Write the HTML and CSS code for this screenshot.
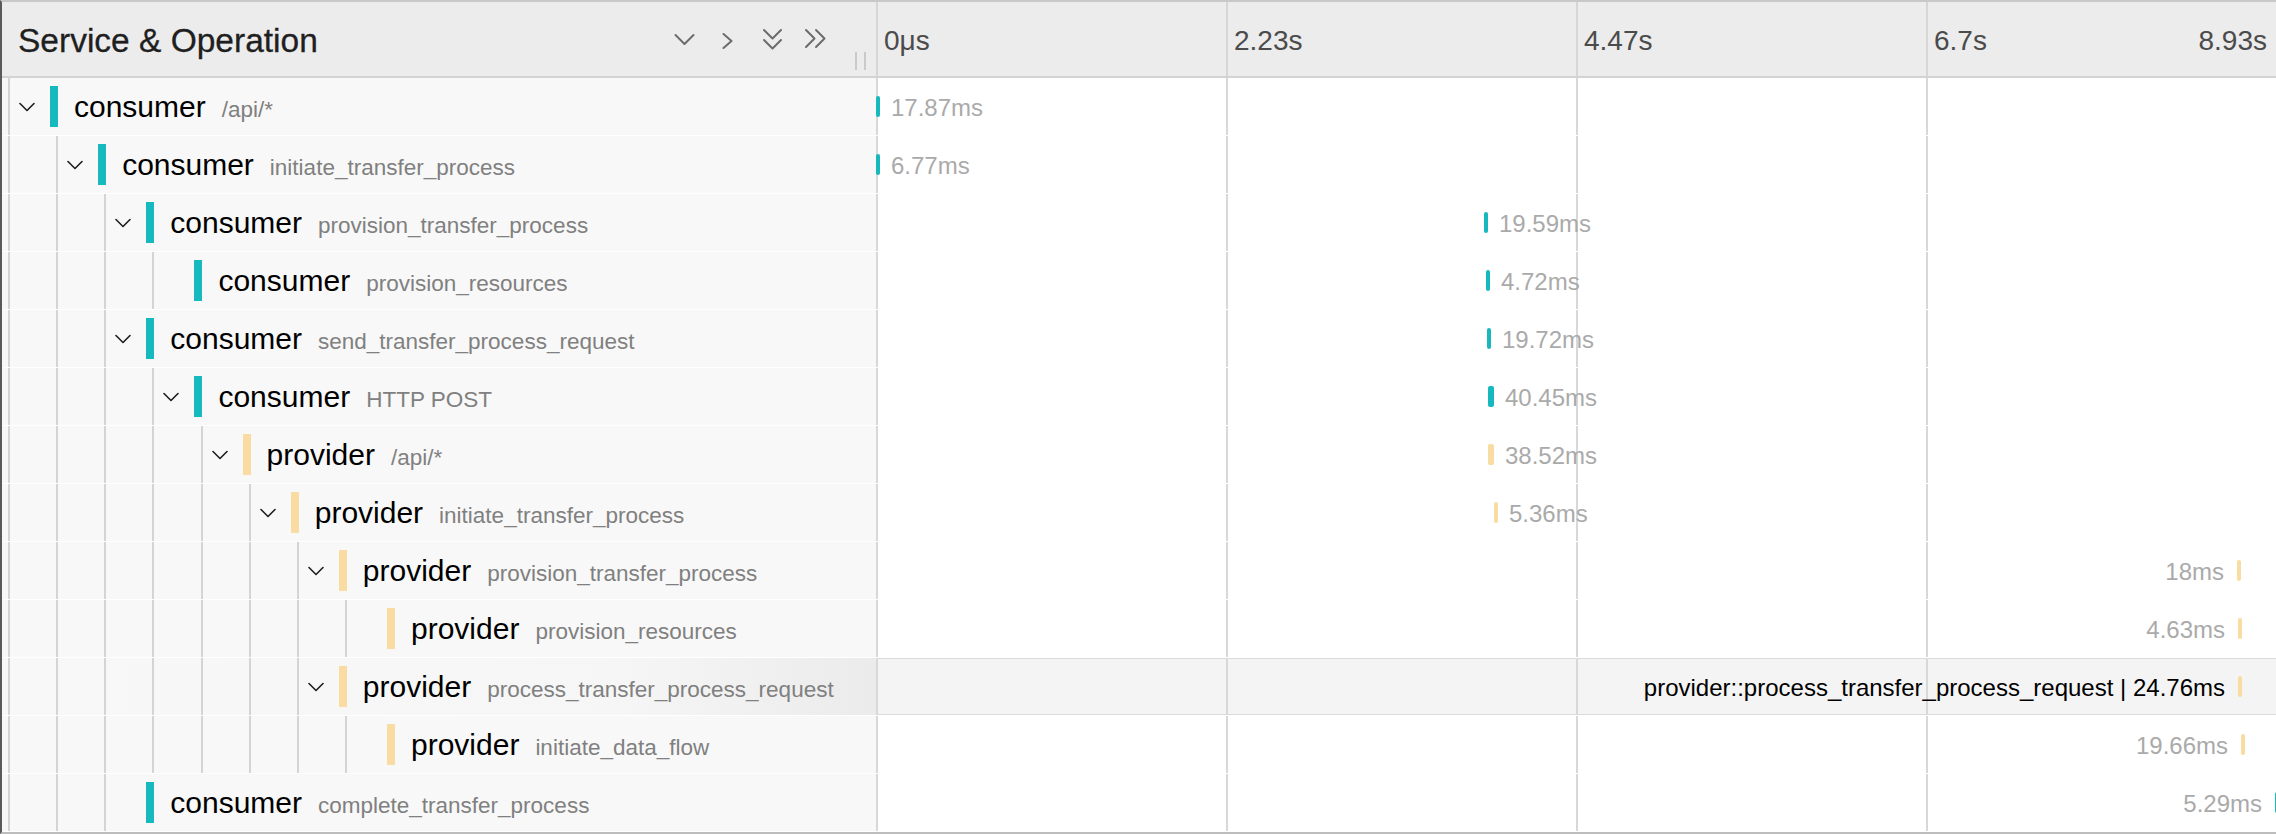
FILE: index.html
```html
<!DOCTYPE html>
<html lang="en">
<head>
<meta charset="utf-8">
<title>Trace timeline</title>
<link rel="stylesheet" href="styles.css">
</head>
<body>
<div class="trace">
  <div class="header">
    <div class="header-left">
      <h3 class="title">Service &amp; Operation</h3>
      <div class="controls">
        <svg class="ic ic1" width="21" height="15" viewBox="0 0 21 15"><polyline points="1.5,3 10.5,12 19.5,3"/></svg>
        <svg class="ic ic2" width="14" height="16" viewBox="0 0 14 16"><polyline points="2.5,1 10.5,8 2.5,15"/></svg>
        <svg class="ic ic3" width="21" height="23" viewBox="0 0 21 23"><polyline points="2,2 10.5,10.5 19,2"/><polyline points="2,12 10.5,20.5 19,12"/></svg>
        <svg class="ic ic4" width="23" height="21" viewBox="0 0 23 21"><polyline points="2,2 10.5,10.5 2,19"/><polyline points="12,2 20.5,10.5 12,19"/></svg>
        <span class="resizer"></span>
      </div>
    </div>
    <div class="header-right">
      <div class="tick"><span>0μs</span></div>
      <div class="tick"><span>2.23s</span></div>
      <div class="tick"><span>4.47s</span></div>
      <div class="tick last"><span>6.7s</span><span>8.93s</span></div>
    </div>
  </div>

  <div class="rows">
    <div class="row">
      <div class="name-col">
        <span class="toggle"><svg class="chev" width="16" height="10" viewBox="0 0 16 10"><polyline points="1,1.5 8,8.5 15,1.5"/></svg></span>
        <span class="marker consumer"></span>
        <span class="name"><span class="svc">consumer</span><span class="op">/api/*</span></span>
      </div>
      <div class="timeline"><span class="bar consumer" style="left:0px;width:4px"><span class="bar-label after">17.87ms</span></span></div>
    </div>

    <div class="row">
      <div class="name-col">
        <span class="guide"></span>
        <span class="toggle"><svg class="chev" width="16" height="10" viewBox="0 0 16 10"><polyline points="1,1.5 8,8.5 15,1.5"/></svg></span>
        <span class="marker consumer"></span>
        <span class="name"><span class="svc">consumer</span><span class="op">initiate_transfer_process</span></span>
      </div>
      <div class="timeline"><span class="bar consumer" style="left:0px;width:4px"><span class="bar-label after">6.77ms</span></span></div>
    </div>

    <div class="row">
      <div class="name-col">
        <span class="guide"></span><span class="guide"></span>
        <span class="toggle"><svg class="chev" width="16" height="10" viewBox="0 0 16 10"><polyline points="1,1.5 8,8.5 15,1.5"/></svg></span>
        <span class="marker consumer"></span>
        <span class="name"><span class="svc">consumer</span><span class="op">provision_transfer_process</span></span>
      </div>
      <div class="timeline"><span class="bar consumer" style="left:608px;width:4px"><span class="bar-label after">19.59ms</span></span></div>
    </div>

    <div class="row">
      <div class="name-col">
        <span class="guide"></span><span class="guide"></span><span class="guide"></span>
        <span class="toggle"></span>
        <span class="marker consumer"></span>
        <span class="name"><span class="svc">consumer</span><span class="op">provision_resources</span></span>
      </div>
      <div class="timeline"><span class="bar consumer" style="left:610px;width:4px"><span class="bar-label after">4.72ms</span></span></div>
    </div>

    <div class="row">
      <div class="name-col">
        <span class="guide"></span><span class="guide"></span>
        <span class="toggle"><svg class="chev" width="16" height="10" viewBox="0 0 16 10"><polyline points="1,1.5 8,8.5 15,1.5"/></svg></span>
        <span class="marker consumer"></span>
        <span class="name"><span class="svc">consumer</span><span class="op">send_transfer_process_request</span></span>
      </div>
      <div class="timeline"><span class="bar consumer" style="left:611px;width:4px"><span class="bar-label after">19.72ms</span></span></div>
    </div>

    <div class="row">
      <div class="name-col">
        <span class="guide"></span><span class="guide"></span><span class="guide"></span>
        <span class="toggle"><svg class="chev" width="16" height="10" viewBox="0 0 16 10"><polyline points="1,1.5 8,8.5 15,1.5"/></svg></span>
        <span class="marker consumer"></span>
        <span class="name"><span class="svc">consumer</span><span class="op">HTTP POST</span></span>
      </div>
      <div class="timeline"><span class="bar consumer" style="left:612px;width:6px"><span class="bar-label after">40.45ms</span></span></div>
    </div>

    <div class="row">
      <div class="name-col">
        <span class="guide"></span><span class="guide"></span><span class="guide"></span><span class="guide"></span>
        <span class="toggle"><svg class="chev" width="16" height="10" viewBox="0 0 16 10"><polyline points="1,1.5 8,8.5 15,1.5"/></svg></span>
        <span class="marker provider"></span>
        <span class="name"><span class="svc">provider</span><span class="op">/api/*</span></span>
      </div>
      <div class="timeline"><span class="bar provider" style="left:612px;width:6px"><span class="bar-label after">38.52ms</span></span></div>
    </div>

    <div class="row">
      <div class="name-col">
        <span class="guide"></span><span class="guide"></span><span class="guide"></span><span class="guide"></span><span class="guide"></span>
        <span class="toggle"><svg class="chev" width="16" height="10" viewBox="0 0 16 10"><polyline points="1,1.5 8,8.5 15,1.5"/></svg></span>
        <span class="marker provider"></span>
        <span class="name"><span class="svc">provider</span><span class="op">initiate_transfer_process</span></span>
      </div>
      <div class="timeline"><span class="bar provider" style="left:618px;width:4px"><span class="bar-label after">5.36ms</span></span></div>
    </div>

    <div class="row">
      <div class="name-col">
        <span class="guide"></span><span class="guide"></span><span class="guide"></span><span class="guide"></span><span class="guide"></span><span class="guide"></span>
        <span class="toggle"><svg class="chev" width="16" height="10" viewBox="0 0 16 10"><polyline points="1,1.5 8,8.5 15,1.5"/></svg></span>
        <span class="marker provider"></span>
        <span class="name"><span class="svc">provider</span><span class="op">provision_transfer_process</span></span>
      </div>
      <div class="timeline"><span class="bar provider" style="left:1361px;width:4px"><span class="bar-label before">18ms</span></span></div>
    </div>

    <div class="row">
      <div class="name-col">
        <span class="guide"></span><span class="guide"></span><span class="guide"></span><span class="guide"></span><span class="guide"></span><span class="guide"></span><span class="guide"></span>
        <span class="toggle"></span>
        <span class="marker provider"></span>
        <span class="name"><span class="svc">provider</span><span class="op">provision_resources</span></span>
      </div>
      <div class="timeline"><span class="bar provider" style="left:1362px;width:4px"><span class="bar-label before">4.63ms</span></span></div>
    </div>

    <div class="row hovered">
      <div class="name-col">
        <span class="guide"></span><span class="guide"></span><span class="guide"></span><span class="guide"></span><span class="guide"></span><span class="guide"></span>
        <span class="toggle"><svg class="chev" width="16" height="10" viewBox="0 0 16 10"><polyline points="1,1.5 8,8.5 15,1.5"/></svg></span>
        <span class="marker provider"></span>
        <span class="name"><span class="svc">provider</span><span class="op">process_transfer_process_request</span></span>
      </div>
      <div class="timeline"><span class="bar provider" style="left:1362px;width:4px"><span class="bar-label before">provider::process_transfer_process_request | 24.76ms</span></span></div>
    </div>

    <div class="row">
      <div class="name-col">
        <span class="guide"></span><span class="guide"></span><span class="guide"></span><span class="guide"></span><span class="guide"></span><span class="guide"></span><span class="guide"></span>
        <span class="toggle"></span>
        <span class="marker provider"></span>
        <span class="name"><span class="svc">provider</span><span class="op">initiate_data_flow</span></span>
      </div>
      <div class="timeline"><span class="bar provider" style="left:1365px;width:4px"><span class="bar-label before">19.66ms</span></span></div>
    </div>

    <div class="row">
      <div class="name-col">
        <span class="guide"></span><span class="guide"></span>
        <span class="toggle"></span>
        <span class="marker consumer"></span>
        <span class="name"><span class="svc">consumer</span><span class="op">complete_transfer_process</span></span>
      </div>
      <div class="timeline"><span class="bar consumer" style="left:1399px;width:4px"><span class="bar-label before">5.29ms</span></span></div>
    </div>
  </div>
</div>
</body>
</html>
```

FILE: styles.css
```css
* {
  box-sizing: border-box;
}

html, body {
  margin: 0;
  padding: 0;
  background: #fff;
}

body {
  font-family: "Liberation Sans", Arial, Helvetica, sans-serif;
  overflow: hidden;
}

.trace {
  width: 2276px;
  height: 834px;
  border-top: 2px solid #c8c8c8;
  border-bottom: 2px solid #bdbdbd;
  border-left: 2px solid #5a5a5a;
  display: flex;
  flex-direction: column;
  overflow: hidden;
}

/* ---------- header ---------- */
.header {
  display: flex;
  height: 76px;
  flex: none;
  background: #ececec;
  border-bottom: 2px solid #d3d3d3;
}

.header-left {
  width: 874px;
  flex: none;
  display: flex;
  align-items: center;
  padding-left: 16px;
}

.title {
  margin: 0;
  font-size: 33.5px;
  font-weight: 400;
  color: #1f1f1f;
  padding-top: 4px;
  flex: 1;
  white-space: nowrap;
  -webkit-text-stroke: 0.3px #1f1f1f;
}

.controls {
  display: flex;
  align-items: center;
  align-self: stretch;
}

.ic {
  flex: none;
  fill: none;
  stroke: #6c6c6c;
  stroke-width: 2;
  stroke-linecap: round;
  stroke-linejoin: round;
}

.ic2 { margin-left: 26px; margin-top: 3px; }
.ic3 { margin-left: 27px; }
.ic4 { margin-left: 21px; margin-top: -2px; }

.resizer {
  align-self: flex-end;
  width: 11px;
  height: 18px;
  margin: 0 10px 6px 28px;
  border-left: 2px solid #cacaca;
  border-right: 2px solid #cacaca;
}

.header-right {
  width: 1400px;
  flex: none;
  display: grid;
  grid-template-columns: repeat(4, 350px);
}

.tick {
  border-left: 2px solid #d6d6d6;
  display: flex;
  align-items: center;
  justify-content: space-between;
  padding: 4px 0 0 6px;
  font-size: 28px;
  color: #4b4b4b;
}

.tick.last {
  padding-right: 9px;
}

/* ---------- rows ---------- */
.rows {
  display: flex;
  flex-direction: column;
}

.row {
  display: flex;
  height: 58px;
  flex: none;
}

.name-col {
  width: 874px;
  flex: none;
  display: flex;
  align-items: stretch;
  padding-left: 6px;
  background: #f8f8f8;
  border-bottom: 1px solid #fff;
  overflow: hidden;
}

.guide {
  width: 48.15px;
  flex: none;
  border-left: 2px solid #d4d4d4;
}

.toggle {
  width: 42px;
  flex: none;
  display: flex;
  align-items: center;
  padding-left: 9px;
  border-left: 2px solid #d4d4d4;
}

.chev {
  fill: none;
  stroke: #1e1e1e;
  stroke-width: 1.6;
  stroke-linecap: round;
  stroke-linejoin: round;
}

.marker {
  width: 8px;
  height: 41px;
  flex: none;
  align-self: center;
}

.consumer { background: #17b8be; }
.provider { background: #f8dca1; }

.name {
  align-self: center;
  display: flex;
  align-items: baseline;
  white-space: nowrap;
  padding-top: 0;
}

.svc {
  margin-left: 16px;
  font-size: 30px;
  color: #000;
}

.op {
  margin-left: 16px;
  font-size: 22.5px;
  color: #808080;
}

.timeline {
  width: 1400px;
  flex: none;
  position: relative;
  border-bottom: 1px solid #fff;
  background-image: linear-gradient(90deg, #d8d8d8 2px, transparent 2px);
  background-size: 350px 100%;
  background-repeat: repeat-x;
}

.row.hovered .name-col {
  background: linear-gradient(90deg, #f8f8f8 0%, #f6f6f6 70%, #ebebeb 100%);
}

.row.hovered .timeline {
  background-color: #f4f4f4;
  box-shadow: inset 0 1px 0 #dadada, inset 0 -1px 0 #dadada;
}

.bar {
  position: absolute;
  top: 50%;
  height: 21px;
  margin-top: -11px;
  border-radius: 2px;
}

.bar-label {
  position: absolute;
  top: 50%;
  transform: translateY(-50%);
  font-size: 24px;
  color: #aaa;
  white-space: nowrap;
  line-height: 1;
  padding-top: 4px;
}

.bar-label.after {
  left: calc(100% + 11px);
}

.bar-label.before {
  right: calc(100% + 13px);
}

.row.hovered .bar-label {
  color: #000;
}
```
